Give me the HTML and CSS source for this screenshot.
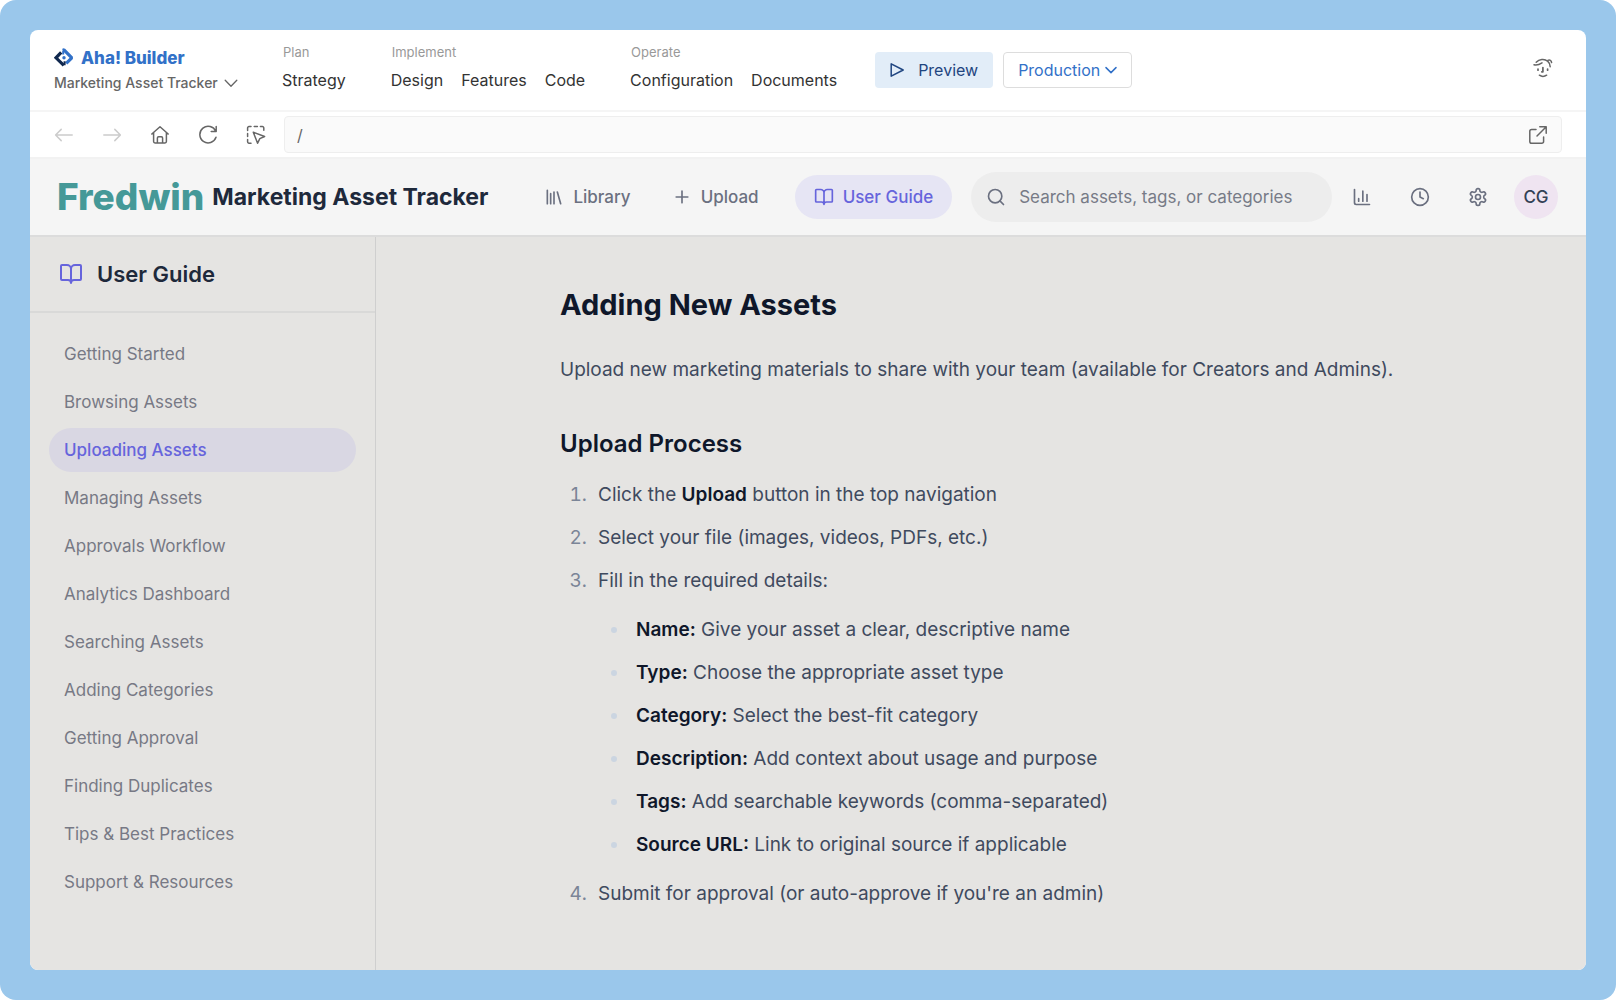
FILE: index.html
```html
<!DOCTYPE html>
<html lang="en">
<head>
<meta charset="utf-8">
<meta name="viewport" content="width=device-width, initial-scale=1">
<title>Marketing Asset Tracker – Aha! Builder</title>
<link rel="stylesheet" href="styles.css">
</head>
<body>
<div class="backdrop">
<div class="window">

  <header class="builder-bar">
    <div class="brand">
      <a class="brand-logo" href="#">
        <svg class="brand-mark" width="20" height="20" viewBox="0 0 20 20" fill="none" stroke-width="3.2">
          <path d="M7.200 4.400 2 9.800l7.800 7.600" stroke="#11294f"/>
          <path d="M8.800 2.400 10 1.800 17.800 9.800 12.200 15.400" stroke="#3271c8" stroke-linejoin="bevel"/>
          <path d="M9.200 2.600v3.800" stroke="#3271c8" stroke-width="2"/>
          <path d="M10.600 13.200v4" stroke="#11294f" stroke-width="2"/>
          <circle cx="10" cy="9.800" r="1.700" fill="#3271c8"/>
        </svg>
        <span>Aha! Builder</span>
      </a>
      <label class="picker project-picker">
        <select aria-label="Project"><option>Marketing Asset Tracker</option></select>
        <svg width="14" height="14" viewBox="0 0 14 14" fill="none" stroke="currentColor" stroke-width="1.3" stroke-linecap="round" stroke-linejoin="round"><path d="m1.200 4.200 5.800 6 5.800-6"/></svg>
      </label>
    </div>

    <nav class="phases" aria-label="Phases">
      <section class="phase">
        <h2>Plan</h2>
        <div class="phase-links"><a href="#">Strategy</a></div>
      </section>
      <section class="phase">
        <h2>Implement</h2>
        <div class="phase-links"><a href="#">Design</a><a href="#">Features</a><a href="#">Code</a></div>
      </section>
      <section class="phase">
        <h2>Operate</h2>
        <div class="phase-links"><a href="#">Configuration</a><a href="#">Documents</a></div>
      </section>
    </nav>

    <div class="builder-actions">
      <button class="preview" type="button">
        <svg width="16" height="16" viewBox="0 0 16 16" fill="none" stroke="currentColor" stroke-width="1.5" stroke-linejoin="round"><path d="M2.200 1.800v12.400L14.200 8z"/></svg>
        Preview
      </button>
      <label class="picker env-picker">
        <select aria-label="Environment"><option>Production</option></select>
        <svg width="12" height="12" viewBox="0 0 12 12" fill="none" stroke="currentColor" stroke-width="1.5" stroke-linecap="round" stroke-linejoin="round"><path d="m1 3.600 5 5 5-5"/></svg>
      </label>
    </div>

    <button class="plain account" type="button" aria-label="Account">
      <svg width="20" height="20" viewBox="0 0 20 20" fill="none" stroke="currentColor" stroke-width="1.500" stroke-linecap="round" stroke-linejoin="round">
        <path d="M1 6.800c3 .6 5.400-.2 8-1.900"/>
        <path d="M3.200 4.200C6 1.200 11.500.2 14.600 3.200c1.600 1.300 2.500 3.200 2.600 5.600"/>
        <path d="M14.800 2.400c2-.9 3.700.2 3.800 2.200"/>
        <path d="M5 11v1.200M14.600 11v1.200M9.900 9.600v4.200H8.800" stroke-width="1.700"/>
        <path d="M6.400 17.200c2.200 1.500 5 1.500 7.200 0"/>
      </svg>
    </button>
  </header>

  <div class="browser-bar">
    <button class="plain" type="button" disabled aria-label="Back"><svg width="20" height="20" viewBox="0 0 20 20"><path d="M18.200 10H1.800m5.400-5.600L1.600 10l5.600 5.600"/></svg></button>
    <button class="plain" type="button" disabled aria-label="Forward"><svg width="20" height="20" viewBox="0 0 20 20"><path d="M1.800 10h16.400m-5.400-5.600 5.600 5.600-5.600 5.600"/></svg></button>
    <button class="plain" type="button" aria-label="Home"><svg width="20" height="20" viewBox="0 0 20 20"><path d="M1.800 9 10 1.800 18.200 9M3.600 7.600v9a1.400 1.400 0 0 0 1.400 1.400h10a1.400 1.400 0 0 0 1.400-1.400v-9M7.400 18v-5a1.200 1.200 0 0 1 1.200-1.200h2.800a1.200 1.200 0 0 1 1.200 1.200v5"/></svg></button>
    <button class="plain" type="button" aria-label="Reload"><svg width="20" height="20" viewBox="0 0 20 20"><path d="M18.200 1.600v5h-5M17.800 6.400A8.300 8.300 0 1 0 18 12.300"/></svg></button>
    <button class="plain" type="button" aria-label="Select element"><svg width="20" height="20" viewBox="0 0 20 20"><path d="M1.600 5.400V3a1.400 1.400 0 0 1 1.400-1.400h2M8.200 1.600h3.200M14.400 1.600h2A1.400 1.400 0 0 1 17.800 3v2.200M1.600 8.600v3M1.600 14.600v2.200A1.400 1.400 0 0 0 3 18.200h2M7.300 7.200l11.300 4.300-4.800 2.100-2.200 4.700z"/></svg></button>
    <form class="address">
      <input type="text" value="/" aria-label="Path">
      <button class="plain" type="button" aria-label="Open in new tab"><svg width="20" height="20" viewBox="0 0 20 20"><path d="M11.800 1.800h6.400v6.400M18 2l-9 9M8 4.400H3.600a1.800 1.800 0 0 0-1.800 1.800v10.200a1.800 1.800 0 0 0 1.800 1.800h10.200a1.800 1.800 0 0 0 1.800-1.800V12"/></svg></button>
    </form>
  </div>

  <header class="app-bar">
    <a class="app-brand" href="#"><span class="company">Fredwin</span><span class="product">Marketing Asset Tracker</span></a>
    <nav class="app-nav" aria-label="Main">
      <a href="#"><svg class="lucide" width="20" height="20" viewBox="0 0 24 24"><path d="m16 6 4 14M12 6v14M8 8v12M4 4v16"/></svg>Library</a>
      <a href="#"><svg class="lucide" width="20" height="20" viewBox="0 0 24 24"><path d="M5 12h14M12 5v14"/></svg>Upload</a>
      <a class="active" href="#"><svg class="lucide" width="20" height="20" viewBox="0 0 24 24"><path d="M12 7v14M3 18a1 1 0 0 1-1-1V4a1 1 0 0 1 1-1h5a4 4 0 0 1 4 4 4 4 0 0 1 4-4h5a1 1 0 0 1 1 1v13a1 1 0 0 1-1 1h-6a3 3 0 0 0-3 3 3 3 0 0 0-3-3z"/></svg>User Guide</a>
    </nav>
    <label class="search">
      <svg class="lucide" width="20" height="20" viewBox="0 0 24 24"><circle cx="11" cy="11" r="8"/><path d="m21 21-4.300-4.300"/></svg>
      <input type="search" placeholder="Search assets, tags, or categories" aria-label="Search">
    </label>
    <div class="app-tools">
      <button class="plain" type="button" aria-label="Analytics"><svg class="lucide" width="20" height="20" viewBox="0 0 24 24"><path d="M3 3v16a2 2 0 0 0 2 2h16M18 17V9M13 17V5M8 17v-3"/></svg></button>
      <button class="plain" type="button" aria-label="History"><svg class="lucide" width="20" height="20" viewBox="0 0 24 24"><circle cx="12" cy="12" r="10"/><path d="M12 6v6l4 2"/></svg></button>
      <button class="plain" type="button" aria-label="Settings"><svg class="lucide" width="20" height="20" viewBox="0 0 24 24"><path d="M12.220 2h-.44a2 2 0 0 0-2 2v.18a2 2 0 0 1-1 1.730l-.43.25a2 2 0 0 1-2 0l-.15-.08a2 2 0 0 0-2.730.73l-.22.38a2 2 0 0 0 .73 2.730l.15.1a2 2 0 0 1 1 1.720v.51a2 2 0 0 1-1 1.740l-.15.09a2 2 0 0 0-.73 2.730l.22.38a2 2 0 0 0 2.730.73l.15-.08a2 2 0 0 1 2 0l.43.25a2 2 0 0 1 1 1.730V20a2 2 0 0 0 2 2h.44a2 2 0 0 0 2-2v-.18a2 2 0 0 1 1-1.730l.43-.25a2 2 0 0 1 2 0l.15.08a2 2 0 0 0 2.730-.73l.22-.39a2 2 0 0 0-.73-2.730l-.15-.08a2 2 0 0 1-1-1.740v-.5a2 2 0 0 1 1-1.740l.15-.09a2 2 0 0 0 .73-2.730l-.22-.38a2 2 0 0 0-2.730-.73l-.15.08a2 2 0 0 1-2 0l-.43-.25a2 2 0 0 1-1-1.730V4a2 2 0 0 0-2-2z"/><circle cx="12" cy="12" r="3"/></svg></button>
      <button class="plain avatar" type="button">CG</button>
    </div>
  </header>

  <div class="workspace">
    <aside class="sidebar">
      <h2 class="sidebar-title"><svg class="lucide" width="24" height="24" viewBox="0 0 24 24"><path d="M12 7v14M3 18a1 1 0 0 1-1-1V4a1 1 0 0 1 1-1h5a4 4 0 0 1 4 4 4 4 0 0 1 4-4h5a1 1 0 0 1 1 1v13a1 1 0 0 1-1 1h-6a3 3 0 0 0-3 3 3 3 0 0 0-3-3z"/></svg>User Guide</h2>
      <nav class="topics" aria-label="Guide topics">
        <a href="#">Getting Started</a>
        <a href="#">Browsing Assets</a>
        <a class="active" href="#">Uploading Assets</a>
        <a href="#">Managing Assets</a>
        <a href="#">Approvals Workflow</a>
        <a href="#">Analytics Dashboard</a>
        <a href="#">Searching Assets</a>
        <a href="#">Adding Categories</a>
        <a href="#">Getting Approval</a>
        <a href="#">Finding Duplicates</a>
        <a href="#">Tips &amp; Best Practices</a>
        <a href="#">Support &amp; Resources</a>
      </nav>
    </aside>

    <main class="guide">
      <article>
        <h1>Adding New Assets</h1>
        <p>Upload new marketing materials to share with your team (available for Creators and Admins).</p>
        <h2>Upload Process</h2>
        <ol>
          <li>Click the <strong>Upload</strong> button in the top navigation</li>
          <li>Select your file (images, videos, PDFs, etc.)</li>
          <li>Fill in the required details:
            <ul>
              <li><strong>Name:</strong> Give your asset a clear, descriptive name</li>
              <li><strong>Type:</strong> Choose the appropriate asset type</li>
              <li><strong>Category:</strong> Select the best-fit category</li>
              <li><strong>Description:</strong> Add context about usage and purpose</li>
              <li><strong>Tags:</strong> Add searchable keywords (comma-separated)</li>
              <li><strong>Source URL:</strong> Link to original source if applicable</li>
            </ul>
          </li>
          <li>Submit for approval (or auto-approve if you're an admin)</li>
        </ol>
      </article>
    </main>
  </div>

</div>
</div>
</body>
</html>
```

FILE: styles.css
```css
*, *::before, *::after { box-sizing: border-box; }

body {
  margin: 0;
  background: #fff;
  color: #333;
  font-family: Inter, "Liberation Sans", sans-serif;
  font-size: 16px;
  line-height: 24px;
}

h1, h2, p, ol, ul { margin: 0; padding: 0; }
a { color: inherit; text-decoration: none; }
button, input, select { font: inherit; color: inherit; }
svg { display: block; flex: none; }

.plain {
  display: flex;
  align-items: center;
  justify-content: center;
  padding: 0;
  border: 0;
  background: none;
  cursor: pointer;
}

.lucide {
  fill: none;
  stroke: currentColor;
  stroke-width: 2;
  stroke-linecap: round;
  stroke-linejoin: round;
}

.backdrop {
  display: flex;
  min-height: 100vh;
  padding: 30px;
  border-radius: 16px;
  background: #9ac7eb;
}

.window {
  display: flex;
  flex: 1;
  flex-direction: column;
  min-width: 0;
  overflow: hidden;
  border-radius: 8px;
  background: #fff;
}

/* Builder toolbar */
.builder-bar {
  display: flex;
  align-items: flex-start;
  height: 82px;
  padding: 12px 33px 12px 24px;
  border-bottom: 2px solid #f5f5f5;
}

.brand { width: 228px; padding-top: 4px; }

.brand-logo {
  display: flex;
  align-items: center;
  gap: 7px;
  color: #3271c8;
  font-size: 17px;
  font-weight: 800;
}

.picker { display: inline-flex; align-items: center; }
.picker select {
  appearance: none;
  padding: 0;
  border: 0;
  background: none;
}

.project-picker {
  gap: 6px;
  color: #666;
  font-size: 14px;
  font-weight: 500;
  line-height: 22px;
}

.phases { display: flex; gap: 45px; }
.phase h2 {
  padding-left: 1px;
  color: #999;
  font-size: 13px;
  font-weight: 400;
  line-height: 20px;
}
.phase-links { display: flex; gap: 18px; padding-top: 6px; }

.builder-actions { display: flex; gap: 10px; margin-left: 38px; padding-top: 10px; }

.preview, .env-picker { height: 36px; border-radius: 4px; }
.preview {
  display: flex;
  align-items: center;
  gap: 13px;
  padding: 0 15px 0 14px;
  border: 0;
  background: #e2edf8;
  color: #1f4580;
}
.env-picker {
  gap: 4px;
  padding: 0 14px;
  border: 1px solid #ddd;
  color: #3271c8;
}

.account { margin: 16px 0 0 auto; color: #666; }

/* Preview browser controls */
.browser-bar {
  display: flex;
  align-items: center;
  gap: 28px;
  padding: 4px 24px;
  color: #666;
}
.browser-bar svg {
  fill: none;
  stroke: currentColor;
  stroke-width: 1.5;
  stroke-linecap: round;
  stroke-linejoin: round;
}
.browser-bar .plain:disabled { color: #ccc; }

.address {
  display: flex;
  flex: 1;
  align-items: center;
  height: 37px;
  margin-left: -10px;
  padding: 0 13px 0 12px;
  border: 1px solid #eee;
  border-radius: 4px;
  background: #fafafa;
}
.address input {
  flex: 1;
  min-width: 0;
  padding: 0;
  border: 0;
  outline: 0;
  background: none;
}

/* Application header */
.app-bar {
  display: flex;
  align-items: center;
  height: 80px;
  padding: 0 28px 0 27px;
  border-top: 2px solid #f2f2f2;
  border-bottom: 2px solid #dcdcdc;
  background: #f5f5f5;
  color: #6b7080;
  font-size: 17px;
}
.app-brand { display: flex; align-items: center; gap: 8px; white-space: nowrap; }
.company { color: #459998; font-size: 37px; font-weight: 800; line-height: 44px; }
.product { color: #1e293b; font-size: 23px; font-weight: 700; }

.app-nav { display: flex; gap: 3px; margin-left: 37px; font-weight: 500; }
.app-nav a {
  display: flex;
  align-items: center;
  gap: 9px;
  height: 44px;
  padding: 0 19px;
  border-radius: 22px;
  white-space: nowrap;
}
.app-nav .active { margin-left: 14px; background: #e6e5f4; color: #6664dc; }

.search {
  display: flex;
  flex: 1;
  align-items: center;
  gap: 13px;
  height: 50px;
  margin-left: 19px;
  padding: 0 15px;
  border-radius: 25px;
  background: #ededed;
}
.search input {
  flex: 1;
  min-width: 0;
  padding: 0;
  border: 0;
  outline: 0;
  background: none;
}
.search input::placeholder { color: #777b87; opacity: 1; }

.app-tools { display: flex; align-items: center; gap: 38px; margin-left: 20px; }
.avatar {
  width: 44px;
  height: 44px;
  margin-left: -12px;
  border-radius: 50%;
  background: #efe4f1;
  color: #334155;
  font-weight: 500;
}

/* Guide */
.workspace { display: flex; flex: 1; background: #e5e4e2; }

.sidebar { flex: none; width: 346px; border-right: 1px solid #cfcfcf; }
.sidebar-title {
  display: flex;
  align-items: center;
  gap: 14px;
  height: 76px;
  padding: 0 29px;
  border-bottom: 2px solid #d9d9d8;
  color: #1e293b;
  font-size: 22px;
  font-weight: 600;
}
.sidebar-title svg { color: #6664dc; }

.topics { display: flex; flex-direction: column; gap: 4px; padding: 19px; }
.topics a {
  padding: 10px 15px;
  border-radius: 22px;
  color: #777985;
  font-size: 17px;
}
.topics .active { background: #d9d7e3; color: #6664dc; font-weight: 500; }

.guide {
  flex: 1;
  padding: 48px 30px;
  color: #3f4a5e;
  font-size: 19px;
  line-height: 31px;
}
.guide article { max-width: 842px; margin: 0 auto; }
.guide h1 { color: #0f172a; font-size: 29px; font-weight: 700; line-height: 40px; }
.guide p { margin-top: 29px; }
.guide h2 { margin-top: 41px; color: #0f172a; font-size: 24px; font-weight: 600; line-height: 36px; }
.guide ol { display: grid; gap: 12px; margin-top: 17px; padding-left: 32px; }
.guide ol > li { padding-left: 6px; }
.guide ol > li::marker { color: #7b8597; }
.guide ul { display: grid; gap: 12px; margin: 18px 0 6px; padding-left: 32px; list-style: disc; }
.guide ul > li { padding-left: 6px; }
.guide ul > li::marker { color: #cbd5e1; }
.guide strong { color: #0f172a; font-weight: 600; }
```
